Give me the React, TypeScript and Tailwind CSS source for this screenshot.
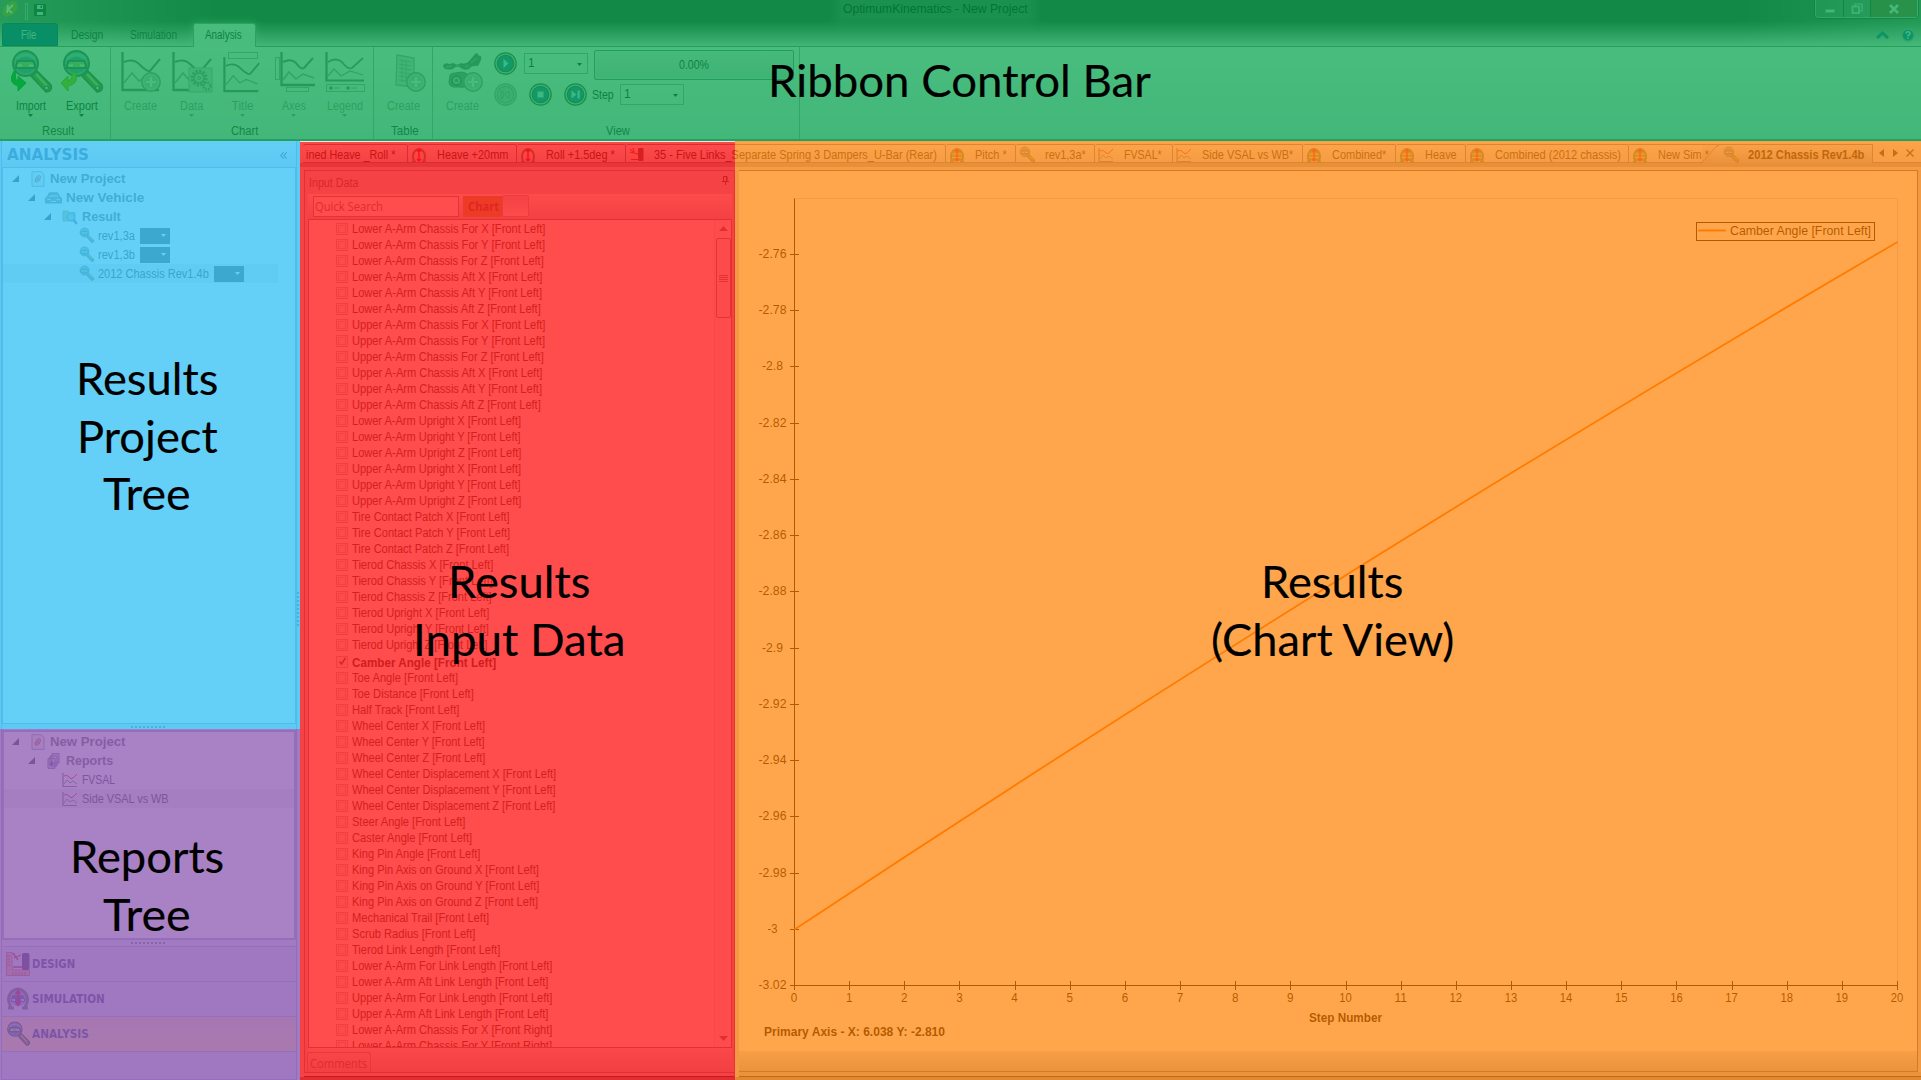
import React, { useLayoutEffect, useRef } from "react";

const UI = "font-['Liberation_Sans',sans-serif]";
const HUMAN = "font-['Open_Sans',sans-serif]";

/** A single line of text set to a fixed measure. */
function Fit({ w, children, className = "" }: { w: number; children: string; className?: string }) {
  const ref = useRef<HTMLSpanElement>(null);
  useLayoutEffect(() => {
    const el = ref.current;
    if (!el) return;
    el.style.transform = "none";
    el.style.transform = `scaleX(${w / el.offsetWidth})`;
  }, [w, children]);
  return (
    <span className={`block shrink-0 whitespace-nowrap ${className}`} style={{ width: w }}>
      <span ref={ref} className="inline-block origin-left">
        {children}
      </span>
    </span>
  );
}

/* ---------- icons ---------- */

function Magnifier({ size = 16, arrow }: { size?: number; arrow?: string }) {
  return (
    <svg width={size} height={size} viewBox="0 0 42 42" className={`shrink-0 overflow-visible ${size < 20 ? "opacity-75" : ""}`}>
      <path d="M21 25 L27 20 L41 34 Q43 40 36 41 Z" fill="#7d8a4c" stroke="#5c6450" strokeWidth="1.500" />
      <path d="M26 23 L37 35" stroke="#c5d098" strokeWidth="2.500" />
      <circle cx="36.500" cy="37" r="2" fill="#ddd" stroke="#555" />
      <circle cx="15.500" cy="12.500" r="12.500" fill="#7c9cac" stroke="#60706c" strokeWidth="2" />
      <circle cx="15.500" cy="12.500" r="10.500" fill="#6a98b4" stroke="#a4b8b8" strokeWidth="1" />
      <path d="M6 8 Q15 0 25 8" stroke="#a0c0d0" strokeWidth="3" fill="none" />
      <path d="M8 10 H23 L25 14 V17 H6 V14 Z" fill="#b4c484" stroke="#44586c" strokeWidth="1.500" />
      <path d="M8 14.500 h4 M19 14.500 h4" stroke="#f4f8c4" strokeWidth="2" />
      {arrow === "in" && <path d="M4 20 Q-3 32 8 35 L8 40 L16 32 L8 25 L8 30 Q4 28 6 21 Z" fill="#10b01c" stroke="#1e9426" />}
      {arrow === "out" && <path d="M14 21 Q19 33 7 35 L7 40 L0 32 L7 25 L7 30 Q12 28 11 22 Z" fill="#a6c81c" stroke="#88a81c" />}
    </svg>
  );
}

function ChartGlyph({ kind }: { kind: string }) {
  const narrow = kind === "axes";
  return (
    <svg width="42" height="42" viewBox="0 0 42 42" fill="none" className="shrink-0 overflow-visible">
      {kind === "title" && <rect x="6.500" y="1.500" width="29" height="6" stroke="#a8a8a8" />}
      {narrow && (
        <>
          <rect x="2.500" y="6.500" width="4" height="22" stroke="#a8a8a8" />
          <rect x="13.500" y="36.500" width="22" height="4" stroke="#a8a8a8" />
        </>
      )}
      {kind === "legend" ? (
        <>
          <path d="M2.500 1 V29.500 H40" stroke="#7c7c7c" strokeWidth="2.200" />
          <path d="M4 11 Q12 6 18 11 Q24 19 28 17 L39 7" stroke="#858585" strokeWidth="1.800" />
          <path d="M4 25 L10 18 L17 25 L26 20 L39 24" stroke="#a0a0a0" strokeWidth="1.300" />
          <rect x="2.500" y="33.500" width="38" height="7" stroke="#a8a8a8" />
          <circle cx="7" cy="37" r="1.800" fill="#7c7c7c" />
          <circle cx="24" cy="37" r="1.800" fill="#7c7c7c" />
          <path d="M10 37 h6 M27 37 h6" stroke="#a0a0a0" />
        </>
      ) : (
        <g transform={narrow ? "translate(7 0)" : kind === "title" ? "translate(1 5) scale(.93 .9)" : "translate(1 0)"}>
          <path d={narrow ? "M1.500 1 V34 H35" : "M1.500 1 V39 H38"} stroke="#7c7c7c" strokeWidth="2.300" />
          <path d={narrow ? "M3 11 Q11 7 16 12 Q21 19 24 17 L33 7" : "M3 11 Q12 7 18 13 Q26 21 29 20 L39 8"} stroke="#808080" strokeWidth="2" />
          <path d={narrow ? "M3 29 L9 21 L16 28 L23 23 L34 27" : "M3 32 L11 22 L18 30 L25 26 L37 31"} stroke="#a0a0a0" strokeWidth="1.500" />
        </g>
      )}
      {kind === "create" && <Plus cx={31} cy={31} />}
      {kind === "data" && (
        <>
          <rect x="18" y="17" width="23" height="24" fill="#d8d8d8" stroke="#b0b0b0" />
          <circle cx="28" cy="27" r="7" stroke="#949494" strokeWidth="3" strokeDasharray="2.200 1.464" />
          <circle cx="28" cy="27" r="5" stroke="#949494" strokeWidth="1.500" />
          <circle cx="28" cy="27" r="1.500" stroke="#949494" />
          <circle cx="36" cy="35" r="3.500" stroke="#949494" strokeWidth="2.500" strokeDasharray="1.600 1.150" />
        </>
      )}
    </svg>
  );
}

function Plus({ cx, cy }: { cx: number; cy: number }) {
  return (
    <g>
      <circle cx={cx} cy={cy} r="9.300" fill="#c4c4c4" stroke="#949494" strokeWidth="1.300" />
      <circle cx={cx} cy={cy} r="7.300" fill="none" stroke="#dcdcdc" />
      <path d={`M${cx - 5} ${cy} h10 M${cx} ${cy - 5} v10`} stroke="#f0f0f0" strokeWidth="2.200" />
    </g>
  );
}

function TableGlyph() {
  return (
    <svg width="42" height="42" viewBox="0 0 42 42" fill="none" className="overflow-visible">
      <path d="M14 4 L31 7 V36 L13 34 Z" fill="#d8d8d8" stroke="#a8a8a8" strokeWidth="1.300" />
      <path d="M16 9 L28 11 M16 13 L28 15 M16 17 L28 19 M16 21 L28 23 M16 25 L26 26 M16 29 L24 30 M19 8 V31 M23 9 V31" stroke="#acacac" />
      <Plus cx={33} cy={31} />
    </svg>
  );
}

function CameraGlyph() {
  return (
    <svg width="42" height="42" viewBox="0 0 42 42" fill="none" className="overflow-visible">
      <path d="M1 15 Q2 11 7 13 L12 12 Q14 15 19 12 Q24 14 28 9 L33 3 Q36 1 37 5 Q40 4 39 9 L36 15 Q30 14 27 18 Q22 20 19 17 Q14 14 11 18 Q2 20 1 15 Z" fill="#7c7c7c" />
      <path d="M4 16 L10 15 M14 14 L18 15 M29 12 L35 7 M23 16 L27 14" stroke="#a4a4a4" strokeWidth="1.600" />
      <path d="M8 24 Q9 22 13 22 L20 21 Q26 22 26 25 V33 Q25 37 18 36 L11 36 Q7 35 7 31 Z" fill="#949494" stroke="#7c7c7c" />
      <circle cx="14.500" cy="29.500" r="4.500" fill="#c4c4c4" stroke="#747474" strokeWidth="1.800" />
      <circle cx="14.500" cy="29.500" r="1.800" fill="#888" />
      <Plus cx={31} cy={31} />
    </svg>
  );
}

function RoundButton({ kind, off }: { kind: string; off?: boolean }) {
  const ring = off ? "#a4a4a4" : "#4d5a54";
  return (
    <svg width="23" height="23" viewBox="0 0 23 23" className="shrink-0">
      <circle cx="11.500" cy="11.500" r="10.700" fill={off ? "#ccc" : "#c8d0cc"} stroke={ring} strokeWidth="1.200" />
      <circle cx="11.500" cy="11.500" r="8.200" fill={off ? "#c6c6c6" : "#3a7cb4"} stroke={ring} strokeWidth="1.200" />
      <g fill={off ? "#d4d4d4" : "#d4e4f4"} stroke={off ? "#949494" : "none"} strokeWidth=".9">
        {kind === "play" && <path d="M9.500 7 L14.500 11.500 L9.500 16 Z" />}
        {kind === "prev" && <path d="M7 8 h2 v7 h-2 Z M15 8 V15 L10.500 11.500 Z" />}
        {kind === "stop" && <rect x="8.500" y="8.500" width="6" height="6" />}
        {kind === "next" && <path d="M7.500 7.500 V15.500 L12.500 11.500 Z M13.500 7.500 h2.200 v8 h-2.200 Z" />}
      </g>
    </svg>
  );
}

function MiniChart() {
  return (
    <svg width="16" height="16" viewBox="0 0 16 16" fill="none" className="shrink-0">
      <path d="M1 1 V14.500 H15" stroke="#8c8c90" strokeWidth="1.200" />
      <path d="M2 4 Q5 2 7 5 Q9 8 11 6 L15 2" stroke="#e8505c" strokeWidth="1" />
      <path d="M2 12 L5 8 L8 11 L11 9 L15 12" stroke="#7cac80" strokeWidth="1" />
    </svg>
  );
}

function Dome({ size = 16, open }: { size?: number; open?: boolean }) {
  return (
    <svg width={size} height={size} viewBox="0 0 16 16" fill="none" className="shrink-0">
      <path d="M3 14 Q0.500 8 4 4 Q8 0 12 4 Q15.500 8 13 14" stroke="#7c9c74" strokeWidth="2" fill={open ? "none" : "#98b068"} />
      <path d="M1 14.500 h4 M11 14.500 h4" stroke="#7c9c74" strokeWidth="1.500" />
      {!open && <path d="M3 7 h10 M3 10.500 h10" stroke="#d6d6ee" strokeWidth="1" />}
      <path d="M8 2.500 V14 M6 4.500 L8 2.500 L10 4.500 M6 12 L8 14 L10 12" stroke="#f83048" strokeWidth="1.400" />
    </svg>
  );
}

function SimulationIcon() {
  return (
    <svg width="24" height="24" viewBox="0 0 24 24" fill="none" className="shrink-0">
      <circle cx="12" cy="11" r="8.500" fill="#b0b0dc" />
      <path d="M5 20 Q0 12 5 5.500 Q12 -1.500 19 5.500 Q24 12 19 20" stroke="#788c88" strokeWidth="3" />
      <path d="M2 21 h6 M16 21 h6" stroke="#788c88" strokeWidth="3" />
      <path d="M5 12 L7 8 H17 L19 12 V15 H5 Z" fill="#7474a8" />
      <path d="M6 13 h3 M15 13 h3" stroke="#e8e8ff" strokeWidth="1.500" />
      <path d="M12 4 V18 M9.500 7 L12 4 L14.500 7 M9.500 15 L12 18 L14.500 15" stroke="#d83468" strokeWidth="1.800" />
    </svg>
  );
}

function WheelIcon() {
  return (
    <svg width="16" height="16" viewBox="0 0 16 16" fill="none" className="shrink-0">
      <rect x="9" y="1" width="5.500" height="13" rx="1" fill="#7c6c74" />
      <path d="M1 2 L5 6 L9 7 M4 1 L5 5 M1 5 L5 6 M2 12.500 H9" stroke="#f04838" strokeWidth="1" />
    </svg>
  );
}

function RulerWheel() {
  return (
    <svg width="24" height="24" viewBox="0 0 24 24" fill="none" className="shrink-0">
      <path d="M.5 .5 H6 V18 H23.500 V23.500 H.5 Z" fill="#f0b8b0" stroke="#cc8c84" />
      <path d="M1 4 h3 M1 7 h3 M1 10 h3 M1 13 h3 M7 23 v-3 M10 23 v-3 M13 23 v-3 M16 23 v-3 M19 23 v-3" stroke="#b47870" />
      <path d="M7 1 L12 8 M8 6 L15 3 M7 15 H16" stroke="#d8505c" strokeWidth="1.300" />
      <rect x="16" y="1" width="7.500" height="17" rx="2" fill="#6c6080" />
    </svg>
  );
}

function DocIcon() {
  return (
    <svg width="14" height="16" viewBox="0 0 14 16" fill="none" className="shrink-0">
      <path d="M1 .7 H10 L13 3.500 V15.300 H1 Z" fill="#f4f4f4" stroke="#b0b0bc" />
      <path d="M4.500 11 Q3.500 7 8 4.500 Q10.500 5 8.500 9 Q6 12 4.500 11 Z M5.500 9.500 L8 6.500" stroke="#cc8c74" strokeWidth="1.200" />
    </svg>
  );
}

function ReportsIcon() {
  return (
    <svg width="14" height="16" viewBox="0 0 14 16" fill="none" className="shrink-0">
      <path d="M5 .7 H12 V10 H5 Z M3 3 H10 V13 H3 Z M1 5.500 H8 V15.300 H1 Z" fill="#dde" stroke="#8c8ca0" />
      <path d="M4.500 8 V13" stroke="#c46" strokeWidth="1.200" />
      <path d="M2.500 11 h4" stroke="#58c" strokeWidth="2" />
    </svg>
  );
}

function CarIcon() {
  return (
    <svg width="17" height="12" viewBox="0 0 17 12" className="shrink-0">
      <path d="M2 5 L4.500 .8 H12.500 L15 5 L16.500 6 V11 H.5 V6 Z" fill="#a4acb4" stroke="#848c94" strokeWidth=".8" />
      <path d="M2.500 7.500 h3 M11.500 7.500 h3 M4 4 h9 M6 9.500 h5" stroke="#eef2f6" strokeWidth="1.200" />
    </svg>
  );
}

function FolderIcon() {
  return (
    <svg width="16" height="16" viewBox="0 0 16 16" className="shrink-0 overflow-visible">
      <path d="M1 2 H6 L7 3.500 H13 V12 H1 Z" fill="#c4d4a0" stroke="#a8bc90" strokeWidth=".8" />
      <circle cx="9" cy="8" r="3.800" fill="#b8d4e4" stroke="#8ca4b4" />
      <path d="M11.500 11 L15 15" stroke="#8494a0" strokeWidth="2" />
    </svg>
  );
}

const Caret = ({ className = "" }: { className?: string }) => (
  <svg width="5" height="3" viewBox="0 0 5 3" className={`shrink-0 ${className}`}>
    <path d="M0 0 H5 L2.500 3 Z" fill="currentColor" />
  </svg>
);

/* ---------- title bar and ribbon ---------- */

function TitleArea() {
  return (
    <div className="relative flex h-[46px] shrink-0 flex-col bg-linear-to-b from-[#3c463c] from-45% to-[#dcdcdc] to-100%">
      <div className="absolute inset-y-0 left-0 w-[220px] bg-linear-to-r from-white/35 to-transparent" />
      <div className="absolute inset-y-0 right-0 w-[180px] bg-linear-to-l from-white/30 to-transparent" />
      <div className="relative flex h-[23px] items-start">
        <svg width="16" height="18" viewBox="0 0 16 18" className="ml-[2px] shrink-0">
          <ellipse cx="8" cy="9" rx="9" ry="6" transform="rotate(-48 8 9)" fill="#c0982c" />
          <path d="M6 5 L5 13 M11 5 L6 9.500 L10 13" stroke="#fff" strokeWidth="1.800" fill="none" />
        </svg>
        <div className="mt-[3px] ml-[7px] h-[17px] w-[3px] border border-white/40" />
        <svg width="12" height="12" viewBox="0 0 12 12" className="mt-1 ml-[6px]">
          <rect width="12" height="12" rx="1" fill="#2c3c34" />
          <path d="M3 1 h6 v4 h-6 Z M3 8 h6 v3 h-6 Z" fill="#dde" />
          <rect x="6.500" y="1.500" width="1.500" height="2.500" fill="#2c3c34" />
        </svg>
        <div className="ml-[795px] flex h-[18px] items-center bg-white/15 px-[2px] text-black shadow-[0_0_10px_6px_rgba(255,255,255,.15)]">
          <Fit w={185} className="text-[12px]">OptimumKinematics - New Project</Fit>
        </div>
        <div className="mt-[-1px] mr-[3px] ml-auto flex h-[19px] rounded-b-[4px] border border-white/40 bg-white/15 shadow-[0_0_0_1px_rgba(0,0,0,.4)]">
          <div className="flex w-[28px] items-center justify-center border-r border-black/50">
            <div className="mt-[4px] h-[4px] w-[10px] border border-black/30 bg-white/80" />
          </div>
          <div className="flex w-[27px] items-center justify-center border-r border-black/50">
            <svg width="12" height="12" viewBox="0 0 12 12" fill="none" stroke="#d0d0d0" strokeWidth="1.800">
              <path d="M4 3 V1 H11 V8 H9" strokeWidth="1.200" />
              <rect x="1.500" y="3.500" width="6.500" height="6.500" />
            </svg>
          </div>
          <div className="flex w-[46px] items-center justify-center bg-[#8c4a1c]/60">
            <svg width="12" height="10" viewBox="0 0 12 10" stroke="#e4e4e4" strokeWidth="2.600">
              <path d="M2 1 L10 9 M10 1 L2 9" />
            </svg>
          </div>
        </div>
      </div>
      <div className="relative flex h-[23px] text-[12px] leading-[24px] text-[#2c2c2c]">
        <div className="ml-[2px] w-[56px] rounded-t-[3px] border border-[#1a3f80] bg-[#1f5aa6] pl-[18px] leading-[22px] text-[#d0dcf4]">
          <Fit w={15}>File</Fit>
        </div>
        <Fit w={32} className="ml-[13px]">Design</Fit>
        <Fit w={47} className="ml-[27px]">Simulation</Fit>
        <div className="ml-[16px] h-[24px] w-[63px] rounded-t-[3px] border border-b-0 border-[#8c9c94] bg-[#f0f0f0] pl-[11px] leading-[22px] shadow-[0_0_8px_rgba(255,255,255,.4)]">
          <Fit w={37}>Analysis</Fit>
        </div>
        <div className="ml-auto flex items-center gap-[12px] pr-[6px]">
          <svg width="13" height="8" viewBox="0 0 13 8" fill="none">
            <path d="M1 7 L6.500 2 L12 7" stroke="#2868a4" strokeWidth="3" />
          </svg>
          <svg width="14" height="14" viewBox="0 0 14 14">
            <circle cx="7" cy="7" r="6" fill="#2b6db0" stroke="#98a8a4" strokeWidth="1.500" />
            <path d="M5 5.500 Q5 3.800 7 3.800 Q9 3.800 9 5.500 Q9 6.500 7 7.500 V8.500 M7 9.500 V11" stroke="#dce8f4" strokeWidth="1.500" fill="none" />
          </svg>
        </div>
      </div>
    </div>
  );
}

type Btn = { label: string; w: number; icon: React.ReactNode; caret?: boolean; on?: boolean };

function RibbonButton({ label, w, icon, caret, on }: Btn) {
  return (
    <div className={`flex w-[51px] shrink-0 flex-col items-center pt-[4px] ${on ? "text-[#2c2c2c]" : "text-[#949494]"}`}>
      {icon}
      <Fit w={w} className="mt-[5px] text-[12px] leading-[16px]">{label}</Fit>
      {caret && <Caret />}
    </div>
  );
}

function Group({ title, tw, className, children }: { title: string; tw: number; className: string; children: React.ReactNode }) {
  return (
    <div className={`flex shrink-0 flex-col border-r border-[#a4aca8] ${className}`}>
      <div className="flex h-[76px]">{children}</div>
      <Fit w={tw} className="self-center text-[12px] leading-[16px] text-[#3c3c3c]">{title}</Fit>
    </div>
  );
}

function Combo({ value }: { value: string }) {
  return (
    <div className="flex h-[21px] w-[64px] items-center justify-between border border-[#a4aca8] bg-[#f0f0f0]/40 pr-[5px] pl-[3px] text-[12px] leading-none text-[#2c2c2c]">
      <span className="mb-[2px]">{value}</span>
      <Caret className="mt-[2px]" />
    </div>
  );
}

function Ribbon() {
  return (
    <div className="flex h-[95px] shrink-0 border-t border-b-2 border-t-[#7c8c84] border-b-[#84908a] bg-linear-to-b from-[#f4f4f4] to-[#dfe1e3] pl-[1px]">
      <Group title="Result" tw={32} className="w-[110px] pl-[4px]">
        <RibbonButton on caret label="Import" w={30} icon={<Magnifier size={42} arrow="in" />} />
        <RibbonButton on caret label="Export" w={32} icon={<Magnifier size={42} arrow="out" />} />
      </Group>
      <Group title="Chart" tw={27} className="w-[263px] pl-[4px]">
        <RibbonButton label="Create" w={33} icon={<ChartGlyph kind="create" />} />
        <RibbonButton caret label="Data" w={23} icon={<ChartGlyph kind="data" />} />
        <RibbonButton caret label="Title" w={22} icon={<ChartGlyph kind="title" />} />
        <RibbonButton caret label="Axes" w={24} icon={<ChartGlyph kind="axes" />} />
        <RibbonButton caret label="Legend" w={36} icon={<ChartGlyph kind="legend" />} />
      </Group>
      <Group title="Table" tw={28} className="w-[59px] pl-[4px]">
        <RibbonButton label="Create" w={33} icon={<TableGlyph />} />
      </Group>
      <Group title="View" tw={24} className="w-[367px] pl-[4px]">
        <RibbonButton label="Create" w={33} icon={<CameraGlyph />} />
        <div className="ml-[6px] flex flex-col pt-[3px]">
          <div className="flex items-start">
            <div className="pt-[2px]"><RoundButton kind="play" /></div>
            <div className="ml-[7px] pt-[3px]"><Combo value="1" /></div>
            <div className="ml-[6px] flex h-[30px] w-[200px] items-center justify-center rounded-[2px] border border-[#6c8c84] bg-linear-to-b from-[#e8e8e8] to-[#d0d2d4] text-[#2c2c2c] shadow-[inset_0_0_0_1px_rgba(255,255,255,.3)]">
              <Fit w={30} className="text-[12px]">0.00%</Fit>
            </div>
          </div>
          <div className="mt-[3px] flex h-[23px] items-center">
            <RoundButton kind="prev" off />
            <div className="ml-[12px]"><RoundButton kind="stop" /></div>
            <div className="ml-[12px]"><RoundButton kind="next" /></div>
            <Fit w={22} className="ml-[5px] text-[12px] text-[#2c2c2c]">Step</Fit>
            <div className="ml-[6px]"><Combo value="1" /></div>
          </div>
        </div>
      </Group>
    </div>
  );
}

/* ---------- left side ---------- */

function Row({ indent, icon, label, w, bold, open, combo, sel, gap = 6 }: { indent: number; icon: React.ReactNode; label: string; w: number; bold?: boolean; open?: boolean; combo?: boolean; sel?: string; gap?: number }) {
  return (
    <div className="flex h-[19px] shrink-0">
      <div className={`flex h-[19px] items-center ${sel ?? ""}`}>
        <div style={{ width: indent }} className="flex shrink-0 justify-end">
          {open && (
            <svg width="7" height="7" viewBox="0 0 7 7" className="mr-[10px]">
              <path d="M7 0 V7 H0 Z" fill="#60686e" />
            </svg>
          )}
        </div>
        <div className="flex w-[17px] shrink-0 justify-center">{icon}</div>
        <div style={{ marginLeft: gap - 3 }} className={bold ? "text-[13px] font-bold text-[#84888e]" : "text-[12px] text-[#666e74]"}>
          <Fit w={w}>{label}</Fit>
        </div>
        {combo && (
          <div className="ml-[5px] flex h-[16px] w-[30px] items-center justify-end bg-[#787878] pr-[4px] text-white">
            <Caret />
          </div>
        )}
      </div>
    </div>
  );
}

const Dots = ({ vertical }: { vertical?: boolean }) => (
  <div className={`flex gap-[2px] ${vertical ? "flex-col" : ""}`}>
    {Array.from({ length: 9 }, (_, i) => (
      <i key={i} className="block size-[2px] bg-[#9098ac]" />
    ))}
  </div>
);

function NavRow({ icon, label, w, active }: { icon: React.ReactNode; label: string; w: number; active?: boolean }) {
  return (
    <div className={`flex h-[35px] shrink-0 items-center border-t border-[#c0c4e0] pl-[4px] ${active ? "bg-linear-to-b from-[#f6dcc4] to-[#fce4b0]" : "bg-[#dce0f0]"}`}>
      {icon}
      <Fit w={w} className="ml-[2px] font-['DejaVu_Sans',sans-serif] text-[12px] font-bold text-[#68689c]">{label}</Fit>
    </div>
  );
}

function Sidebar() {
  const Mag = <Magnifier size={15} />;
  return (
    <div className="flex w-[300px] shrink-0 bg-[#e4e8f4]">
      <div className="ml-[1px] flex w-[296px] flex-col border-x border-[#b4bcd4]">
        <div className="flex h-[26px] shrink-0 items-center justify-between bg-linear-to-b from-[#fafafa] to-[#e4e8f0] pt-[2px] pr-[9px] pl-[5px]">
          <Fit w={82} className="font-['DejaVu_Sans',sans-serif] text-[15px] font-bold text-[#7488ac]">ANALYSIS</Fit>
          <svg width="7" height="7" viewBox="0 0 8 8" fill="none" stroke="#6478a0" strokeWidth="1.300">
            <path d="M4 .5 L1 4 L4 7.500 M7.500 .5 L4.500 4 L7.500 7.500" />
          </svg>
        </div>
        <div className="flex h-[557px] shrink-0 flex-col border border-[#b4bcd4] bg-white pt-[1px]">
          <Row indent={26} open icon={<DocIcon />} label="New Project" w={75} bold gap={7} />
          <Row indent={42} open icon={<CarIcon />} label="New Vehicle" w={78} bold gap={7} />
          <Row indent={58} open icon={<FolderIcon />} label="Result" w={39} bold gap={7} />
          <Row indent={75} icon={Mag} label="rev1,3a" w={37} combo />
          <Row indent={75} icon={Mag} label="rev1,3b" w={37} combo />
          <Row indent={75} icon={Mag} label="2012 Chassis Rev1.4b" w={111} combo sel="bg-[#f0f0f0] w-[275px]" />
        </div>
        <div className="flex h-[6px] shrink-0 items-center justify-center pr-[2px]"><Dots /></div>
        <div className="flex h-[210px] shrink-0 flex-col border-2 border-[#b8bcdc] bg-white">
          <Row indent={25} open icon={<DocIcon />} label="New Project" w={75} bold gap={7} />
          <Row indent={41} open icon={<ReportsIcon />} label="Reports" w={47} bold gap={7} />
          <Row indent={57} icon={<MiniChart />} label="FVSAL" w={33} gap={7} />
          <Row indent={57} icon={<MiniChart />} label="Side VSAL vs WB" w={87} gap={7} sel="bg-[#f0f0f0] w-full" />
        </div>
        <div className="flex h-[6px] shrink-0 items-center justify-center pr-[2px]"><Dots /></div>
        <NavRow icon={<RulerWheel />} label="DESIGN" w={43} />
        <NavRow icon={<SimulationIcon />} label="SIMULATION" w={73} />
        <NavRow icon={<Magnifier size={24} />} label="ANALYSIS" w={57} active />
        <div className="flex-1 border-y border-[#c0c4e0] bg-[#dce0f0]" />
      </div>
      <div className="flex items-center pb-[4px]"><Dots vertical /></div>
    </div>
  );
}

/* ---------- document tabs ---------- */

type Tab = { label: string; w: number; icon?: React.ReactNode; width: number; gap: number };

const tabs: Tab[] = [
  { label: "ined Heave _Roll *", w: 89, width: 105, gap: 3 },
  { label: "Heave +20mm", w: 71, width: 109, gap: 10, icon: <Dome open /> },
  { label: "Roll +1.5deg *", w: 69, width: 109, gap: 9, icon: <Dome open /> },
  { label: "35 - Five Links_Separate Spring 3 Dampers_U-Bar (Rear)", w: 283, width: 320, gap: 8, icon: <WheelIcon /> },
  { label: "Pitch *", w: 32, width: 70, gap: 9, icon: <Dome /> },
  { label: "rev1,3a*", w: 41, width: 79, gap: 9, icon: <Magnifier /> },
  { label: "FVSAL*", w: 38, width: 78, gap: 10, icon: <MiniChart /> },
  { label: "Side VSAL vs WB*", w: 91, width: 130, gap: 10, icon: <MiniChart /> },
  { label: "Combined*", w: 54, width: 93, gap: 9, icon: <Dome /> },
  { label: "Heave", w: 32, width: 70, gap: 9, icon: <Dome /> },
  { label: "Combined (2012 chassis)", w: 126, width: 163, gap: 9, icon: <Dome /> },
];

function TabStrip() {
  return (
    <div className="flex h-[25px] shrink-0 border-b-4 border-[#b0b4c0] bg-linear-to-b from-[#f4f4f4] to-[#e0e0e8] pt-[2px]">
      <div className="w-[3px]" />
      {tabs.map((t) => (
        <div key={t.label + t.width} className="flex shrink-0 items-center rounded-t-[2px] border-t border-r border-b border-[#8c90a8] bg-linear-to-b from-[#f8f8f8] to-[#dcdce4] pt-[2px] text-[12px] text-[#484848]" style={{ width: t.width }}>
          {t.icon && <div className="ml-[3px] flex w-[16px]">{t.icon}</div>}
          <Fit w={t.w} className={t.gap === 3 ? "ml-[3px]" : t.gap === 8 ? "ml-[9px]" : t.gap === 10 ? "ml-[10px]" : "ml-[10px]"}>{t.label}</Fit>
        </div>
      ))}
      <div className="flex w-[73px] shrink-0 items-center border-t border-b border-[#8c90a8] bg-linear-to-b from-[#f8f8f8] to-[#dcdce4] pt-[2px] text-[12px] text-[#484848]">
        <div className="ml-[3px]"><Dome /></div>
        <Fit w={51} className="ml-[10px]">New Sim *</Fit>
      </div>
      <div className="flex w-[171px] shrink-0 items-center border-t border-r border-[#8c90a8] bg-linear-to-b from-[#f0f0f0] to-[#b8bcc8] text-[12px] font-bold text-[#2c2c2c]">
        <svg width="20" height="19" viewBox="0 0 20 19" fill="none" className="ml-[-3px] shrink-0">
          <path d="M2 19 L17 1.500 L20 .5" stroke="#8c90a8" />
        </svg>
        <div className="ml-[4px] pt-px"><Magnifier /></div>
        <Fit w={116} className="ml-[9px] pt-[2px]">2012 Chassis Rev1.4b</Fit>
      </div>
      <div className="flex flex-1 items-center justify-between border-b border-[#8c90a8] pr-[7px] pl-[6px]">
        <svg width="5" height="8" viewBox="0 0 5 8"><path d="M5 0 V8 L0 4 Z" fill="#444" /></svg>
        <svg width="5" height="8" viewBox="0 0 5 8"><path d="M0 0 V8 L5 4 Z" fill="#444" /></svg>
        <svg width="8" height="8" viewBox="0 0 8 8" stroke="#444" strokeWidth="1.200"><path d="M.5 .5 L7.500 7.500 M7.500 .5 L.5 7.500" /></svg>
      </div>
    </div>
  );
}

/* ---------- input data ---------- */

const rows: [string, number][] = [
  ["Lower A-Arm Chassis For X [Front Left]", 193],
  ["Lower A-Arm Chassis For Y [Front Left]", 193],
  ["Lower A-Arm Chassis For Z [Front Left]", 192],
  ["Lower A-Arm Chassis Aft X [Front Left]", 190],
  ["Lower A-Arm Chassis Aft Y [Front Left]", 190],
  ["Lower A-Arm Chassis Aft Z [Front Left]", 189],
  ["Upper A-Arm Chassis For X [Front Left]", 193],
  ["Upper A-Arm Chassis For Y [Front Left]", 193],
  ["Upper A-Arm Chassis For Z [Front Left]", 192],
  ["Upper A-Arm Chassis Aft X [Front Left]", 190],
  ["Upper A-Arm Chassis Aft Y [Front Left]", 190],
  ["Upper A-Arm Chassis Aft Z [Front Left]", 189],
  ["Lower A-Arm Upright X [Front Left]", 169],
  ["Lower A-Arm Upright Y [Front Left]", 169],
  ["Lower A-Arm Upright Z [Front Left]", 169],
  ["Upper A-Arm Upright X [Front Left]", 169],
  ["Upper A-Arm Upright Y [Front Left]", 169],
  ["Upper A-Arm Upright Z [Front Left]", 169],
  ["Tire Contact Patch X [Front Left]", 158],
  ["Tire Contact Patch Y [Front Left]", 158],
  ["Tire Contact Patch Z [Front Left]", 157],
  ["Tierod Chassis X [Front Left]", 141],
  ["Tierod Chassis Y [Front Left]", 141],
  ["Tierod Chassis Z [Front Left]", 140],
  ["Tierod Upright X [Front Left]", 137],
  ["Tierod Upright Y [Front Left]", 137],
  ["Tierod Upright Z [Front Left]", 136],
  ["Camber Angle [Front Left]", 144],
  ["Toe Angle [Front Left]", 106],
  ["Toe Distance [Front Left]", 122],
  ["Half Track [Front Left]", 107],
  ["Wheel Center X [Front Left]", 133],
  ["Wheel Center Y [Front Left]", 133],
  ["Wheel Center Z [Front Left]", 133],
  ["Wheel Center Displacement X [Front Left]", 204],
  ["Wheel Center Displacement Y [Front Left]", 204],
  ["Wheel Center Displacement Z [Front Left]", 203],
  ["Steer Angle [Front Left]", 113],
  ["Caster Angle [Front Left]", 120],
  ["King Pin Angle [Front Left]", 128],
  ["King Pin Axis on Ground X [Front Left]", 187],
  ["King Pin Axis on Ground Y [Front Left]", 187],
  ["King Pin Axis on Ground Z [Front Left]", 186],
  ["Mechanical Trail [Front Left]", 137],
  ["Scrub Radius [Front Left]", 123],
  ["Tierod Link Length [Front Left]", 148],
  ["Lower A-Arm For Link Length [Front Left]", 200],
  ["Lower A-Arm Aft Link Length [Front Left]", 196],
  ["Upper A-Arm For Link Length [Front Left]", 200],
  ["Upper A-Arm Aft Link Length [Front Left]", 196],
  ["Lower A-Arm Chassis For X [Front Right]", 200],
  ["Lower A-Arm Chassis For Y [Front Right]", 200],
];

function InputData() {
  return (
    <div className="flex w-[435px] shrink-0 flex-col border-r border-[#a8a8b8] bg-[#dedee6] pl-[4px]">
      <div className="flex flex-1 flex-col overflow-hidden border-t border-b border-l border-[#a0a0b4] bg-[#dedee6] pr-[2px] pl-[3px]">
        <div className="flex h-[23px] shrink-0 items-center justify-between pr-[3px] pl-px text-[12px] text-[#84848c]">
          <Fit w={49}>Input Data</Fit>
          <svg width="7" height="9" viewBox="0 0 7 9" fill="none" stroke="#66666f" className="mb-[5px]"><path d="M1.500 .5 H5 V5 M1.500 .5 V5 M0 5.500 H7 M3.500 6 V9 M4.500 1 V5" /></svg>
        </div>
        <div className="flex h-[25px] shrink-0 bg-linear-to-b from-[#fafafa] to-[#d8d8e4] pt-[2px] pl-[5px]">
          <div className={`flex h-[21px] w-[146px] items-center border border-[#a8a8b8] bg-white pl-[1px] text-[13px] text-[#94949c] ${HUMAN}`}>
            <Fit w={68}>Quick Search</Fit>
          </div>
          <div className={`ml-[4px] flex h-[21px] w-[39px] items-center bg-[#c4c87c] pl-[5px] text-[13px] font-bold text-[#a0787c] ${HUMAN}`}>
            <Fit w={31}>Chart</Fit>
          </div>
          <div className="mt-[-1px] h-[22px] w-[27px] rounded-[2px] border border-[#c4c4cc] bg-linear-to-b from-[#dcdce4] to-[#fafafa]" />
        </div>
        <div className="flex h-[829px] shrink-0 overflow-hidden border border-[#a0a0b0] bg-white">
          <div className="flex flex-1 flex-col pt-[1px] pl-[27px]">
            {rows.map(([label, w], i) => {
              const on = i === 27;
              return (
                <div key={i} className={`flex shrink-0 items-center ${on ? "h-[17px]" : "h-[16px]"}`}>
                  <div className="flex size-[12px] items-center justify-center border border-[#d0d0d4] bg-[#f8f8f8]">
                    {on ? (
                      <svg width="9" height="9" viewBox="0 0 9 9" fill="none"><path d="M1.500 4.500 L3.500 7 L7.500 1" stroke="#777" strokeWidth="1.500" /></svg>
                    ) : (
                      <div className="size-[8px] border border-[#d8d8dc]" />
                    )}
                  </div>
                  <Fit w={w} className={on ? "mt-[2px] ml-[4px] text-[12px] font-bold text-[#646464]" : "ml-[4px] text-[12px] text-[#6c6c6c]"}>{label}</Fit>
                </div>
              );
            })}
          </div>
          <div className="flex w-[17px] flex-col items-center border-l border-[#ececf0] bg-[#fcfcfc]">
            <svg width="9" height="5" viewBox="0 0 9 5" className="mt-[6px]"><path d="M0 5 H9 L4.500 0 Z" fill="#9c9ca4" /></svg>
            <div className="mt-[7px] flex h-[80px] w-[15px] shrink-0 flex-col items-center justify-center gap-px rounded-[2px] border border-[#a4a4ac] bg-[#f8f8fa]">
              <i className="h-px w-[9px] bg-[#a4a4ac]" />
              <i className="h-px w-[9px] bg-[#a4a4ac]" />
              <i className="h-px w-[9px] bg-[#a4a4ac]" />
              <i className="h-px w-[9px] bg-[#a4a4ac]" />
            </div>
            <svg width="9" height="5" viewBox="0 0 9 5" className="mt-auto mb-[6px]"><path d="M0 0 H9 L4.500 5 Z" fill="#9c9ca4" /></svg>
          </div>
        </div>
        <div className="flex flex-1 bg-linear-to-b from-[#f0f0f4] to-[#d0d0dc] pt-[4px]">
          <div className={`ml-[-1px] flex h-[23px] w-[64px] items-center rounded-t-[3px] border border-b-0 border-[#b8b8c4] pl-[2px] text-[12px] text-[#94949c] ${HUMAN}`}>
            <Fit w={57}>Comments</Fit>
          </div>
        </div>
      </div>
      <div className="h-[4px] shrink-0 border-b border-[#50505c] bg-[#dedee6]" />
    </div>
  );
}

/* ---------- chart ---------- */

const X0 = 55.5;
const Y0 = 27.5;
const PW = 1103;
const PH = 787;

function ChartView() {
  const yTicks = Array.from({ length: 14 }, (_, i) => ({ y: Math.round(814 - i * 56.23), label: String(Math.round((-3.02 + i * 0.02) * 100) / 100) }));
  const xTicks = Array.from({ length: 21 }, (_, i) => ({ x: X0 + (i * PW) / 20, label: String(i) }));
  return (
    <div className="flex min-w-0 flex-1 flex-col bg-[#d4d6e0] pl-[4px]">
      <div className="mr-[3px] flex flex-1 flex-col border-t border-r border-b border-[#6c6c7c] bg-white">
        <svg width="1178" height="880" viewBox="0 0 1178 880" className={`shrink-0 ${UI}`}>
          <path d={`M${X0} ${Y0} H${X0 + PW} V${Y0 + PH}`} fill="none" stroke="#dcdcdc" />
          <path d={`M${X0} ${Y0} V${Y0 + PH} H${X0 + PW}`} fill="none" stroke="#000" />
          {yTicks.map((t) => (
            <g key={t.label}>
              <path d={`M${X0 - 4.500} ${t.y + 0.5} h9`} stroke="#000" />
              <text x="33.500" y={t.y + 4} textAnchor="middle" fontSize="12" textLength={t.label.length === 5 ? 28 : t.label.length === 4 ? 21 : 10} lengthAdjust="spacingAndGlyphs">{t.label}</text>
            </g>
          ))}
          {xTicks.map((t) => (
            <g key={t.label}>
              <path d={`M${Math.floor(t.x) + 0.5} ${Y0 + PH - 4.500} v9`} stroke="#000" />
              <text x={t.x - 0.5} y={Y0 + PH + 16} textAnchor="middle" fontSize="12" textLength={t.label.length === 2 ? 12.500 : 6.500} lengthAdjust="spacingAndGlyphs">{t.label}</text>
            </g>
          ))}
          <path d={`M${X0} 758.500 Q607 393.500 ${X0 + PW} 71`} fill="none" strokeWidth="1.800" className="stroke-[#ff7000]" />
          <rect x="957.500" y="51.500" width="178" height="18" fill="none" stroke="#000" />
          <path d="M959 59.500 h28" strokeWidth="2" className="stroke-[#ff7000]" />
          <text x="991" y="64" fontSize="12" textLength="141" lengthAdjust="spacingAndGlyphs">Camber Angle [Front Left]</text>
          <text x="570" y="850.500" fontSize="12" fontWeight="bold" textLength="73" lengthAdjust="spacingAndGlyphs">Step Number</text>
          <text x="25" y="864.500" fontSize="12" fontWeight="bold" textLength="181" lengthAdjust="spacingAndGlyphs">Primary Axis - X: 6.038 Y: -2.810</text>
        </svg>
        <div className="flex-1 bg-linear-to-b from-[#e4e4ec] to-[#b8bccc]" />
      </div>
      <div className="h-[5px] shrink-0 border-b border-[#30303c] bg-[#b8bccc]" />
    </div>
  );
}

/* ---------- tinted callouts ---------- */

function Caption({ lines, className }: { lines: [string, number][]; className: string }) {
  return (
    <div className={`absolute flex flex-col items-center font-['Lato',sans-serif] text-[45px] leading-[57.6px] text-black [-webkit-text-stroke:0.15px_black] ${className}`}>
      {lines.map(([t, w]) => (
        <Fit key={t} w={w}>{t}</Fit>
      ))}
    </div>
  );
}

export default function App() {
  return (
    <div className={`relative flex h-[1080px] w-[1921px] flex-col overflow-hidden bg-[#e8e8ec] ${UI}`}>
      <TitleArea />
      <Ribbon />
      <div className="flex min-h-0 flex-1">
        <Sidebar />
        <div className="flex min-w-0 flex-1 flex-col">
          <div className="h-px bg-[#e8e8ec]" />
          <TabStrip />
          <div className="flex min-h-0 flex-1 bg-[#dedee6] pt-[3px]">
            <InputData />
            <ChartView />
          </div>
          <div className="h-[3px] shrink-0 bg-[#9c9ca8]" />
        </div>
      </div>

      <div className="absolute top-0 left-0 h-[141px] w-full bg-[#00a54c]/70" />
      <div className="absolute top-[141px] left-0 h-[588px] w-[300px] bg-[#24bcf4]/70" />
      <div className="absolute top-[729px] left-0 h-[351px] w-[300px] bg-[#854cad]/70" />
      <div className="absolute top-[142px] left-[300px] h-[938px] w-[435px] bg-[#ff0000]/70" />
      <div className="absolute top-[141px] left-[735px] h-[939px] w-[1186px] bg-[#ff8000]/70" />

      <Caption className="top-[52px] left-[766px] w-[386px]" lines={[["Ribbon Control Bar", 383]]} />
      <Caption className="top-[350px] left-[72px] w-[150px]" lines={[["Results", 142], ["Project", 141], ["Tree", 88]]} />
      <Caption className="top-[828px] left-[69px] w-[156px]" lines={[["Reports", 154], ["Tree", 88]]} />
      <Caption className="top-[553px] left-[411px] w-[216px]" lines={[["Results", 142], ["Input Data", 213]]} />
      <Caption className="top-[553px] left-[1210px] w-[244px]" lines={[["Results", 142], ["(Chart View)", 243]]} />
    </div>
  );
}
